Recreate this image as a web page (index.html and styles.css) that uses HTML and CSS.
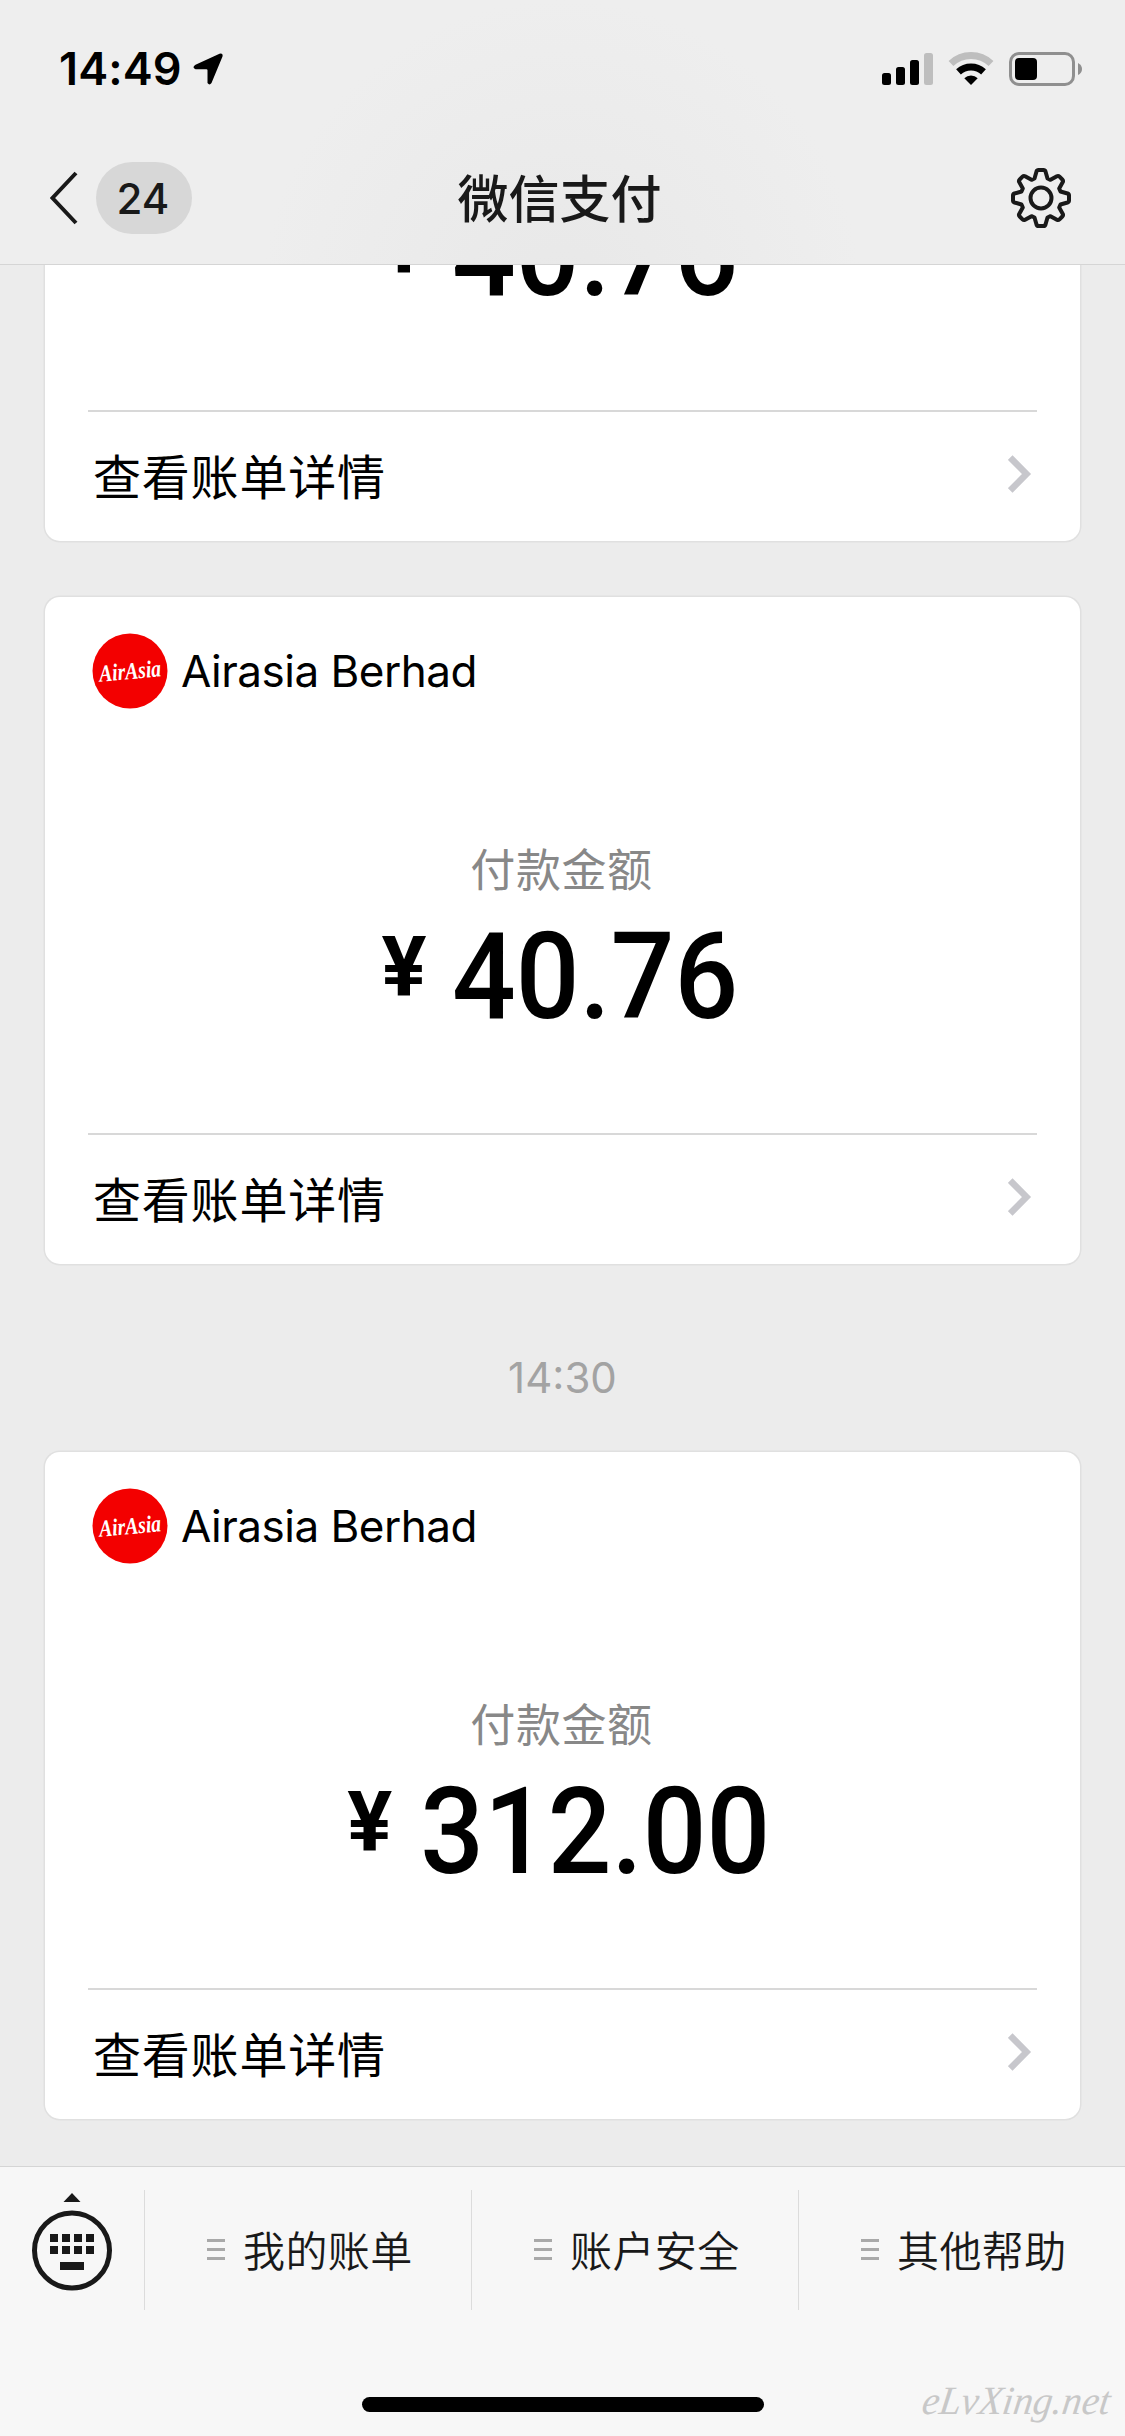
FILE: index.html
```html
<!DOCTYPE html>
<html lang="zh-CN">
<head>
<meta charset="utf-8">
<title>微信支付</title>
<link rel="stylesheet" href="styles.css">
</head>
<body>
<svg class="defs" width="0" height="0" aria-hidden="true">
  <symbol id="chevron" viewBox="0 0 24 38"><path d="M2.200 2.500 18.500 19 2.200 35.500" fill="none" stroke="#c7c7cc" stroke-width="6.500"/></symbol>
  <symbol id="lines" viewBox="0 0 18 22"><path d="M0 1.500h18M0 10.500h18M0 19.500h18" stroke="#a9a9a9" stroke-width="3"/></symbol>
</svg>
<div class="screen">
  <header class="header">
    <div class="status">
      <div class="status-left"><span class="clock">14:49</span>
        <svg width="30" height="32" viewBox="0 0 30 32"><path d="M2.500 11.700 26.500.7Q30.300-.3 29.500 3.400L18.500 30Q16.500 32.800 14.500 30V17.300Q14.500 16.200 13.400 16.200H2.500Q-1.500 14.500 2.500 11.700Z"/></svg>
      </div>
      <div class="status-right">
        <svg width="51" height="34" viewBox="0 0 51 34"><rect y="21" width="9" height="12" rx="2.500"/><rect x="14" y="15" width="9" height="18" rx="2.500"/><rect x="28" y="8" width="9" height="25" rx="2.500"/><rect x="42" y="1" width="9" height="32" rx="2.500" fill="#bebebe"/></svg>
        <svg width="46" height="34" viewBox="0 0 46 34" fill="none"><path d="M3 11.500a29 29 0 0 1 40 0" stroke="#bebebe" stroke-width="7"/><path d="M10.500 19.800a18.500 18.500 0 0 1 25 0" stroke="#000" stroke-width="7"/><path d="M23 33 16.300 26.300a9.500 9.500 0 0 1 13.400 0Z" fill="#000"/></svg>
        <svg width="73" height="34" viewBox="0 0 73 34"><rect x="1.500" y="1.500" width="63" height="31" rx="8.500" fill="none" stroke="#8f8f8f" stroke-width="3"/><rect x="6" y="6" width="22" height="22" rx="4"/><path d="M69 11q4 2 4 6t-4 6Z" fill="#8f8f8f"/></svg>
      </div>
    </div>
    <div class="nav">
      <div class="nav-side">
        <svg width="28" height="54" viewBox="0 0 28 54"><path d="M26 2 2.500 27 26 52" fill="none" stroke="#191919" stroke-width="4"/></svg>
        <span class="unread">24</span>
      </div>
      <h1 class="title">微信支付</h1>
      <div class="nav-side nav-end">
        <svg width="62" height="62" viewBox="-31 -31 62 62" fill="none" stroke="#191919" stroke-width="4" stroke-linejoin="round"><path d="M-4.500-26.500Q-4-28 -2.500-28H2.500Q4-28 4.500-26.500L6.500-19.500 9.500-18.200 15.900-21.800Q17.300-22.500 18.500-21.300L21.300-18.500Q22.500-17.300 21.800-15.900L18.200-9.500 19.500-6.500 26.500-4.500Q28-4 28-2.500V2.500Q28 4 26.500 4.500L19.500 6.500 18.200 9.500 21.800 15.900Q22.500 17.300 21.300 18.500L18.500 21.300Q17.300 22.500 15.900 21.800L9.500 18.200 6.500 19.500 4.500 26.500Q4 28 2.500 28H-2.500Q-4 28-4.500 26.500L-6.500 19.500-9.500 18.200-15.900 21.800Q-17.300 22.500-18.500 21.300L-21.300 18.500Q-22.500 17.300-21.800 15.900L-18.200 9.500-19.500 6.500-26.500 4.500Q-28 4-28 2.500V-2.500Q-28-4-26.500-4.500L-19.500-6.500-18.200-9.500-21.800-15.900Q-22.500-17.300-21.300-18.500L-18.500-21.300Q-17.300-22.500-15.900-21.800L-9.500-18.200-6.500-19.500Z"/><circle r="10.500"/></svg>
      </div>
    </div>
  </header>

  <main class="feed">
    <section class="card card-scrolled">
      <p class="amount"><span class="yen">¥</span><span class="digits">40.76</span></p>
      <div class="detail"><span>查看账单详情</span><svg class="chevron"><use href="#chevron"/></svg></div>
    </section>
    <section class="card">
      <div class="merchant"><svg class="logo" viewBox="0 0 76 76"><circle cx="38" cy="38" r="37.500"/><text x="7" y="46" textLength="62" lengthAdjust="spacingAndGlyphs" transform="rotate(-5 38 38)">AirAsia</text></svg><span>Airasia Berhad</span></div>
      <p class="label">付款金额</p>
      <p class="amount"><span class="yen">¥</span><span class="digits">40.76</span></p>
      <div class="detail"><span>查看账单详情</span><svg class="chevron"><use href="#chevron"/></svg></div>
    </section>
    <time class="stamp">14:30</time>
    <section class="card">
      <div class="merchant"><svg class="logo" viewBox="0 0 76 76"><circle cx="38" cy="38" r="37.500"/><text x="7" y="46" textLength="62" lengthAdjust="spacingAndGlyphs" transform="rotate(-5 38 38)">AirAsia</text></svg><span>Airasia Berhad</span></div>
      <p class="label">付款金额</p>
      <p class="amount"><span class="yen">¥</span><span class="digits">312.00</span></p>
      <div class="detail"><span>查看账单详情</span><svg class="chevron"><use href="#chevron"/></svg></div>
    </section>
  </main>

  <footer class="footer">
    <nav class="menu">
      <div class="keyboard"><svg width="80" height="98" viewBox="0 0 80 98" fill="#191919"><path d="M31.500 9 40 0l8.500 9Z"/><circle cx="40" cy="57.500" r="37.500" fill="none" stroke="#191919" stroke-width="5"/><path d="M18 41h8v8h-8zM30 41h8v8h-8zM42 41h8v8h-8zM54 41h8v8h-8zM18 53h8v8h-8zM30 53h8v8h-8zM42 53h8v8h-8zM54 53h8v8h-8zM28 69h24v8H28z"/></svg></div>
      <div class="menu-item"><svg class="lines"><use href="#lines"/></svg><span>我的账单</span></div>
      <div class="menu-item"><svg class="lines"><use href="#lines"/></svg><span>账户安全</span></div>
      <div class="menu-item"><svg class="lines"><use href="#lines"/></svg><span>其他帮助</span></div>
    </nav>
    <div class="home-bar"></div>
    <svg class="watermark" width="209" height="60"><text x="6" y="38" textLength="188" lengthAdjust="spacingAndGlyphs" transform="skewX(-8) translate(5 0)">eLvXing.net</text></svg>
  </footer>
</div>
</body>
</html>
```
FILE: styles.css
```css
* { box-sizing: border-box; }
body, h1, p { margin: 0; }
body { background: #ececec; font-family: Inter, "Noto Sans CJK SC", sans-serif; color: #000; }
svg { display: block; flex: none; }
.defs { position: absolute; }
.screen { width: 1125px; height: 2436px; display: flex; flex-direction: column; overflow: hidden; }

.header { height: 265px; flex: none; position: relative; z-index: 1; border-bottom: 1px solid #d5d5d5; background: radial-gradient(circle 300px at 562px 300px, #e8e8e8, #eeeeee); }
.status { height: 132px; padding: 6px 43px 0 59px; display: flex; align-items: center; justify-content: space-between; }
.status-left { display: flex; align-items: center; gap: 11px; }
.clock { font-size: 45px; font-weight: 600; line-height: 54px; letter-spacing: 0.1px; }
.status-right { display: flex; align-items: center; gap: 15px; }
.nav { height: 132px; padding: 0 53px 0 50px; display: grid; grid-template-columns: 1fr auto 1fr; align-items: center; }
.nav-side { display: flex; align-items: center; gap: 18px; }
.nav-end { justify-content: flex-end; }
.unread { width: 96px; height: 72px; padding-right: 2px; border-radius: 36px; background: #d7d7d7; color: #191919; font-size: 42px; font-weight: 500; line-height: 74px; text-align: center; }
.title { padding: 3px 3px 0 0; font-size: 51px; font-weight: 500; line-height: 70px; color: #191919; }

.feed { height: 1901px; flex: none; padding: 0 45px 47px; display: flex; flex-direction: column; justify-content: flex-end; }
.card { height: 667px; flex: none; margin-top: 56px; padding: 36px 43px 0; background: #fff; border-radius: 15px; box-shadow: 0 0 0 1.5px #e0e0e0; display: flex; flex-direction: column; }
.merchant { height: 76px; margin-left: 4px; display: flex; align-items: center; gap: 13px; font-size: 44px; letter-spacing: -0.5px; }
.logo { width: 76px; height: 76px; }
.logo circle { fill: #f30000; }
.logo text { font: italic 700 24px "Liberation Serif", serif; letter-spacing: 0; fill: #fff; }
.label { margin-top: 129px; padding-right: 2px; text-align: center; font-size: 45px; letter-spacing: 0.6px; line-height: 66px; color: #888; }
.amount { height: 100px; margin-top: 22px; padding-right: 5px; display: flex; justify-content: center; gap: 26px; font-family: Roboto, sans-serif; font-size: 120px; font-weight: 500; line-height: 102px; }
/* The amount is set slightly condensed; the margins take up the freed width. */
.digits { transform: scaleX(0.935); margin: 0 -10px; }
.yen { font-size: 84px; font-weight: 700; line-height: 84px; }
.detail { margin-top: auto; height: 131px; border-top: 2px solid #d8d8d8; padding: 0 5px 5px 5px; display: flex; align-items: center; justify-content: space-between; font-size: 48px; letter-spacing: 0.8px; }
.detail span { margin-top: -1px; }
.chevron { width: 24px; height: 38px; }
/* Only the lower part of this card is below the header. */
.card-scrolled { height: 338px; padding-top: 0; }
.card-scrolled .amount { margin-top: 0; }
.stamp { height: 132px; flex: none; padding-top: 88px; text-align: center; font-size: 42px; color: #a3a3a3; }

.footer { height: 270px; flex: none; position: relative; background: #f7f7f7; border-top: 1px solid #d5d5d5; display: flex; flex-direction: column; align-items: center; }
.menu { width: 100%; height: 120px; margin-top: 23px; display: grid; grid-template-columns: 144px repeat(3, 1fr); }
.keyboard { padding: 3px 0 0 32px; }
.menu-item { border-left: 1px solid #dcdcdc; padding-left: 62px; display: flex; align-items: center; gap: 18px; font-size: 42px; font-weight: 350; letter-spacing: 0.4px; color: #191919; }
.menu-item span { margin-top: -4px; }
.lines { width: 18px; height: 22px; }
.home-bar { width: 402px; height: 15px; margin-top: 87px; border-radius: 8px; background: #000; }
.watermark { position: absolute; right: 1px; bottom: 0; }
.watermark text { font: italic 40px "Liberation Serif", serif; fill: #c8c8c8; }
```
